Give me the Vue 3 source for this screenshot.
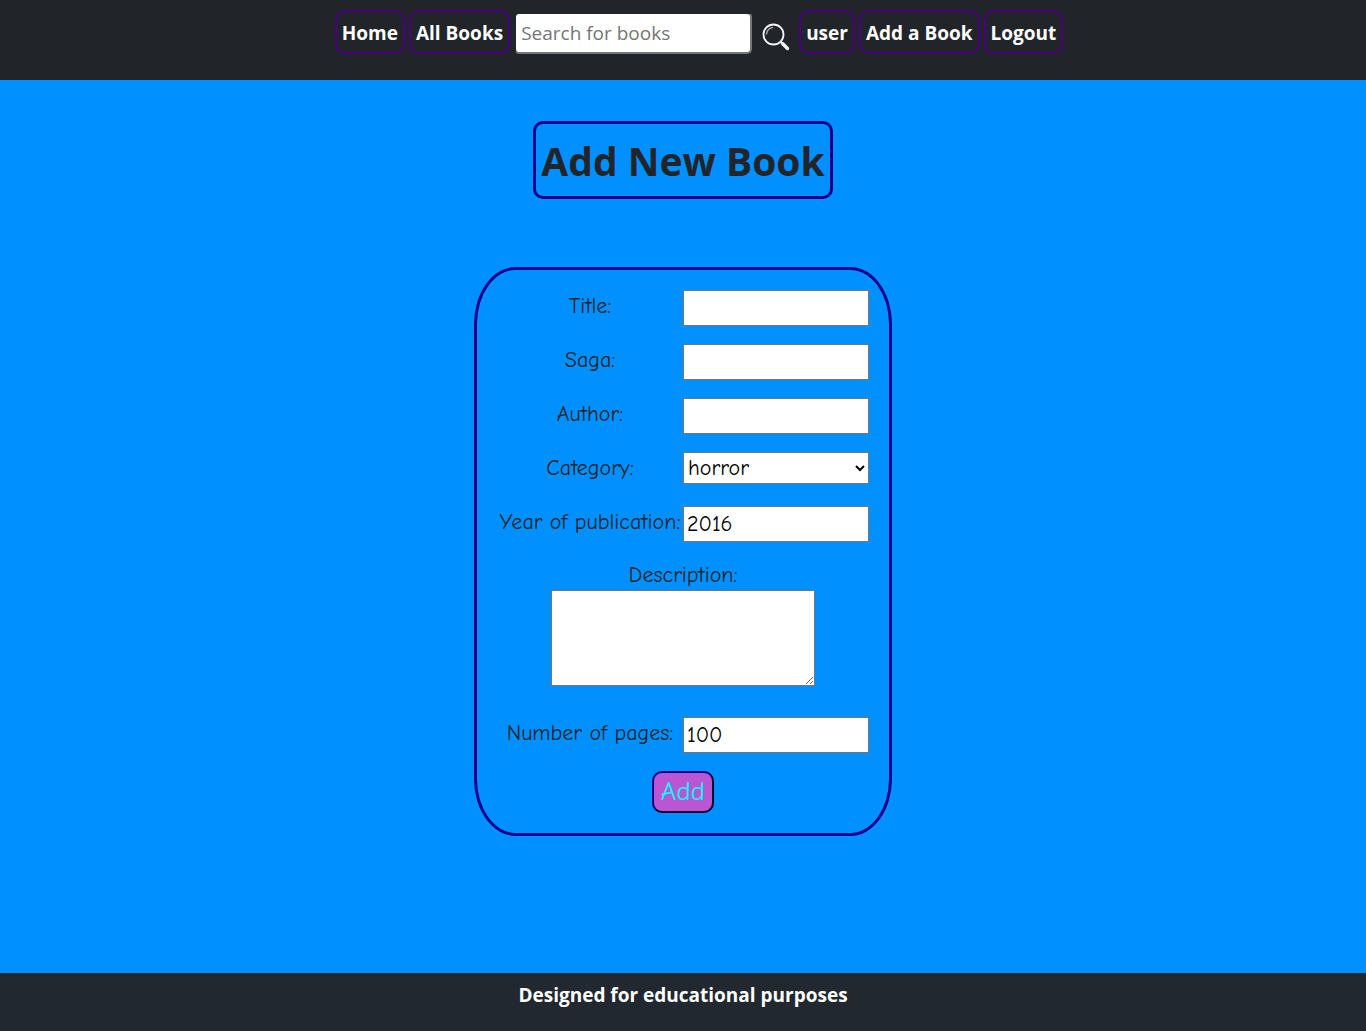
<script setup>
import { ref } from 'vue'

const query = ref('')
const categories = ['horror', 'fantasy', 'romance', 'science']
const book = ref({
  title: '',
  saga: '',
  author: '',
  category: 'horror',
  year: 2016,
  description: '',
  pages: 100,
})
</script>

<template>
  <div class="page">
    <header class="header">
      <nav class="nav">
        <a class="link" href="#home">Home</a>
        <a class="link" href="#books">All Books</a>
        <form class="search" role="search" @submit.prevent>
          <input v-model="query" class="search-box" type="text" placeholder="Search for books" aria-label="Search for books" />
          <button class="search-button" type="submit" aria-label="Search">
            <svg viewBox="0 0 28 28" width="28" height="28" fill="none" stroke="#f4f4f4" aria-hidden="true">
              <circle cx="11.5" cy="11.5" r="10" stroke-width="1.8" />
              <path d="M4.5 11.5a7 7 0 0 1 6.500-7" stroke-width="1.4" stroke="#a4a6a8" />
              <path d="M18.500 18.500l2 2" stroke-width="2" />
              <path d="M20.500 20.500l5 5" stroke-width="3.400" stroke-linecap="round" />
            </svg>
          </button>
        </form>
        <a class="link" href="#user">user</a>
        <a class="link" href="#add">Add a Book</a>
        <a class="link" href="#logout">Logout</a>
      </nav>
    </header>

    <main class="main">
      <h1 class="title">Add New Book</h1>
      <form class="book-form" @submit.prevent>
        <div class="row">
          <label for="title">Title:</label>
          <input id="title" v-model="book.title" type="text" />
        </div>
        <div class="row">
          <label for="saga">Saga:</label>
          <input id="saga" v-model="book.saga" type="text" />
        </div>
        <div class="row">
          <label for="author">Author:</label>
          <input id="author" v-model="book.author" type="text" />
        </div>
        <div class="row">
          <label for="category">Category:</label>
          <select id="category" v-model="book.category">
            <option v-for="c in categories" :key="c" :value="c">{{ c }}</option>
          </select>
        </div>
        <div class="row">
          <label for="year">Year of publication:</label>
          <input id="year" v-model="book.year" type="number" />
        </div>
        <div class="description">
          <label for="description">Description:</label>
          <textarea id="description" v-model="book.description"></textarea>
        </div>
        <div class="row">
          <label for="pages">Number of pages:</label>
          <input id="pages" v-model="book.pages" type="number" />
        </div>
        <button class="add" type="submit">Add</button>
      </form>
    </main>

    <footer class="footer">Designed for educational purposes</footer>
  </div>
</template>

<style>
body {
  margin: 0;
}
</style>

<style scoped>
* {
  box-sizing: border-box;
}

.page {
  display: flex;
  flex-direction: column;
  min-height: 100vh;
  background: #0090ff;
  color: #212529;
  font-family: "Segoe UI", "Open Sans", "Noto Sans", sans-serif;
  font-size: 19px;
}

.header {
  height: 80px;
  padding: 10px 0 0 32px;
  background: #212529;
}

.nav {
  display: flex;
  justify-content: center;
  gap: 4px;
}

.link {
  height: 44px;
  padding: 0 5px;
  border: 2px solid #4b0082;
  border-radius: 10px;
  color: #fff;
  font-weight: 700;
  line-height: 42px;
  text-decoration: none;
  white-space: nowrap;
}

.search {
  display: flex;
  align-items: flex-start;
  gap: 10px;
  padding: 2px 5px 0 0;
}

.search-box {
  width: 238px;
  height: 42px;
  padding: 0 5px;
  border: 2px solid;
  border-color: #212529 #767676 #767676 #212529;
  border-radius: 5px;
  background: #fff;
  font: inherit;
}

.search-box::placeholder {
  color: #757575;
}

.search-button {
  display: flex;
  margin-top: 11px;
  padding: 0;
  border: 0;
  background: none;
}

.main {
  display: flex;
  flex: 1;
  flex-direction: column;
  align-items: center;
  padding: 41px 0;
}

.title {
  width: 300px;
  height: 78px;
  margin: 0 0 68px;
  border: 3px solid #00008b;
  border-radius: 10px;
  font-size: 39px;
  font-weight: 700;
  line-height: 74px;
  text-align: center;
  white-space: nowrap;
}

.book-form {
  display: flex;
  flex-direction: column;
  align-items: center;
  gap: 18px;
  width: 418px;
  padding: 20px;
  border: 3px solid #00008b;
  border-radius: 10%;
  font-family: "Comic Neue", "Comic Sans MS", "Open Sans", sans-serif;
  font-size: 22px;
}

.row {
  display: grid;
  grid-template-columns: 1fr 1fr;
  align-items: start;
  width: 100%;
  height: 36px;
}

label {
  line-height: 32px;
  text-align: center;
  white-space: nowrap;
}

.row input,
select,
textarea {
  width: 100%;
  border: 1px solid #767676;
  border-radius: 0;
  background: #fff;
  color: #000;
  font: inherit;
}

.row input {
  height: 36px;
  padding: 0 3px;
}

select {
  height: 32px;
  padding: 0;
}

.description {
  display: flex;
  flex-direction: column;
  align-items: center;
  width: 100%;
  margin-bottom: 13px;
}

.description label {
  line-height: 30px;
}

.description textarea {
  display: block;
  width: 264px;
  height: 96px;
  padding: 2px;
}

.add {
  width: 62px;
  height: 42px;
  padding: 0;
  border: 2px solid;
  border-color: #00008b #000030 #000030 #00008b;
  border-radius: 10px;
  background: #ba55d3;
  color: #00ffff;
  font: inherit;
  font-size: 27px;
  line-height: 38px;
}

.footer {
  height: 58px;
  background: #212830;
  color: #fff;
  font-weight: 700;
  line-height: 44px;
  text-align: center;
}
</style>
